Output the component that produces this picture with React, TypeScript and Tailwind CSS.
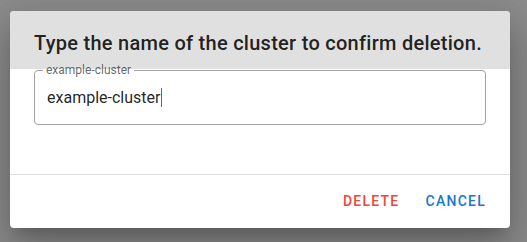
import React from "react";

export default function App() {
  return (
    <div
      className="w-[527px] h-[242px] bg-[#8c8c8c] overflow-hidden pt-[11px] pl-[10px]"
      style={{ fontFamily: "Roboto, 'Liberation Sans', sans-serif" }}
    >
      <div className="w-[500px] h-[217px] bg-white rounded-[4px] flex flex-col shadow-[0px_11px_15px_-7px_rgba(0,0,0,0.2),0px_24px_38px_3px_rgba(0,0,0,0.14),0px_9px_46px_8px_rgba(0,0,0,0.12)]">
        <div className="h-[58px] shrink-0 bg-[#e0e0e0] rounded-t-[4px] px-6 pt-4">
          <h2 className="text-[20px] leading-[32px] font-medium text-[rgba(0,0,0,0.87)] tracking-[0.27px] whitespace-nowrap">
            Type the name of the cluster to confirm deletion.
          </h2>
        </div>
        <div className="h-[106px] shrink-0 px-6 border-b border-[#e0e0e0]">
          <fieldset className="relative -mt-[5px] border border-[#a3a3a3] rounded-[4px] h-[61px]">
            <legend className="ml-[8px] px-[3px] text-[12px] leading-[12px] text-[rgba(0,0,0,0.6)]">
              example-cluster
            </legend>
            <div className="pl-[12px] flex items-center h-[23px] mt-[10px] text-[16px] leading-[23px] text-[rgba(0,0,0,0.87)]">
              <span>example-cluster</span>
              <span className="w-[1px] h-[19px] bg-[#1976d2] ml-[0.5px]" />
            </div>
          </fieldset>
        </div>
        <div className="flex-1 flex items-center justify-end pr-[24px] gap-[26px]">
          <span className="text-[14px] font-medium tracking-[1.25px] text-[#f44336] uppercase">
            Delete
          </span>
          <span className="text-[14px] font-medium tracking-[1.25px] text-[#1976d2] uppercase">
            Cancel
          </span>
        </div>
      </div>
    </div>
  );
}
